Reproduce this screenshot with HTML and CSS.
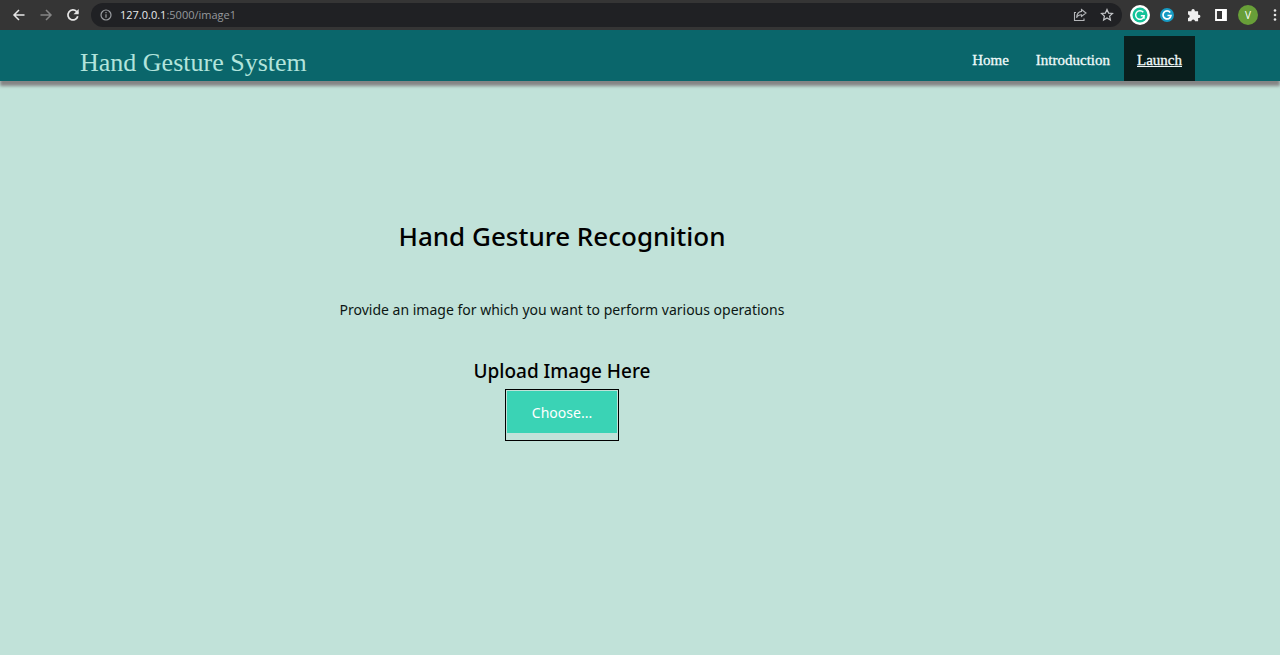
FILE: index.html
```html
<!DOCTYPE html>
<html lang="en">
<head>
<meta charset="utf-8">
<meta name="viewport" content="width=device-width, initial-scale=1">
<title>Hand Gesture System</title>
<link rel="stylesheet" href="styles.css">
</head>
<body>
<div class="toolbar">
  <button class="tool" type="button" aria-label="Back"><svg width="14" height="14" viewBox="0 0 14 14" fill="none" stroke="#e6e6e6" stroke-width="1.5"><path d="M12.5 7H2M7 2L2 7l5 5"/></svg></button>
  <button class="tool" type="button" aria-label="Forward"><svg width="14" height="14" viewBox="0 0 14 14" fill="none" stroke="#858585" stroke-width="1.5"><path d="M1.5 7H12M7 2l5 5-5 5"/></svg></button>
  <button class="tool" type="button" aria-label="Reload"><svg width="14" height="14" viewBox="0 0 14 14" fill="none" stroke="#e6e6e6" stroke-width="1.7"><path d="M11.8 8.2A5 5 0 1 1 10.6 3.5L12 5"/><path d="M12.7 1v5.2H7.5z" fill="#e6e6e6" stroke="none"/></svg></button>
  <div class="address">
    <svg width="12" height="12" viewBox="0 0 12 12" fill="none" stroke="#9a9da1" stroke-width="1.2"><circle cx="6" cy="6" r="5"/><path d="M6 5.3v3.4M6 3v1.3"/></svg>
    <span class="url"><span class="host">127.0.0.1</span>:5000/image1</span>
    <button class="tool" type="button" aria-label="Share"><svg width="14" height="14" viewBox="0 0 14 14" fill="none" stroke="#b4b6b9" stroke-width="1.1"><path d="M3 4.500H1.500v8h9.500V10.500M8.500 1.500L13 5 8.500 8.500V6.700C6 6.700 4.500 7.700 3.600 9.800 3.800 6 5.500 3.800 8.500 3.400z"/></svg></button>
    <button class="tool" type="button" aria-label="Bookmark"><svg width="14" height="14" viewBox="0 0 14 14" fill="none" stroke="#c4c6c9" stroke-width="1.2"><path d="M7 1.500l1.600 3.600 3.900.4-2.900 2.600.8 3.900L7 10l-3.400 2 .8-3.900L1.500 5.500l3.900-.4z"/></svg></button>
  </div>
  <div class="extensions">
    <button class="tool" type="button" aria-label="Grammar checker"><svg width="20" height="20" viewBox="0 0 20 20"><circle cx="10" cy="10" r="10" fill="#fff"/><circle cx="10" cy="10" r="7.500" fill="#14c39a"/><path d="M13.300 7.300A4.300 4.300 0 1 0 14.200 10.800H10.800M14 10.500v3.200" fill="none" stroke="#fff" stroke-width="1.500"/></svg></button>
    <button class="tool" type="button" aria-label="G extension"><svg width="14" height="14" viewBox="0 0 14 14"><circle cx="7" cy="7" r="7" fill="#169bc4"/><path d="M10.200 4.500A4 4 0 1 0 11 7.500H7.500" fill="none" stroke="#fff" stroke-width="1.700"/></svg></button>
    <button class="tool" type="button" aria-label="Extensions"><svg width="14" height="14" viewBox="0 0 14 14"><path fill="#f0f0f0" d="M1 3.300h3.500a1.700 1.700 0 1 1 3.200 0h3.400v3.500a1.700 1.700 0 1 1 0 3.200v3.300H8a1.800 1.800 0 0 0-3.600 0H1V10a1.700 1.700 0 0 0 0-3.400z"/></svg></button>
    <button class="tool" type="button" aria-label="Side panel"><svg width="12" height="12" viewBox="0 0 12 12"><path d="M1 1h10v10H1z" fill="none" stroke="#fff" stroke-width="1.800"/><path d="M7 1h4v10H7z" fill="#fff"/></svg></button>
    <button class="tool avatar" type="button" aria-label="Profile">V</button>
    <button class="tool menu" type="button" aria-label="Menu"><svg width="4" height="14" viewBox="0 0 4 14" fill="#e6e6e6"><circle cx="2" cy="2.500" r="1.300"/><circle cx="2" cy="7" r="1.300"/><circle cx="2" cy="11.500" r="1.300"/></svg></button>
  </div>
</div>
<header class="site-header">
  <div class="brand">Hand Gesture System</div>
  <nav class="nav">
    <a class="nav-link" href="#home">Home</a>
    <a class="nav-link" href="#introduction">Introduction</a>
    <a class="nav-link nav-link-active" href="#launch">Launch</a>
  </nav>
</header>
<main class="content">
  <h1 class="title">Hand Gesture Recognition</h1>
  <p class="lead">Provide an image for which you want to perform various operations</p>
  <h2 class="subtitle">Upload Image Here</h2>
  <div class="upload"><button class="choose" type="button">Choose...</button></div>
</main>
</body>
</html>
```
FILE: styles.css
```css
* {
  box-sizing: border-box;
}

body {
  margin: 0;
  min-height: 100vh;
  background: #c1e2d9;
  color: #000;
  font-family: "Noto Sans", "Open Sans", sans-serif;
}

button {
  border: 0;
  padding: 0;
  background: none;
  font-family: inherit;
  cursor: pointer;
}

.toolbar {
  display: flex;
  align-items: center;
  gap: 13px;
  height: 30px;
  padding-left: 12px;
  background: #353535;
  font-family: "Open Sans", "Noto Sans", sans-serif;
}

.tool {
  display: flex;
  flex: none;
}

.address {
  display: flex;
  flex: 1;
  align-items: center;
  gap: 13px;
  height: 24px;
  margin-left: -2px;
  padding: 0 8px 0 9px;
  border-radius: 12px;
  background: #202124;
}

.url {
  flex: 1;
  margin-left: -5px;
  color: #96999d;
  font-size: 11px;
  line-height: 16px;
}

.host {
  color: #e8eaed;
}

.extensions {
  display: flex;
  align-items: center;
  gap: 7px;
  margin-left: -5px;
}

.extensions .tool {
  justify-content: center;
  width: 20px;
}

.tool.avatar {
  align-items: center;
  height: 20px;
  border-radius: 50%;
  background: #689f38;
  color: #fff;
  font-size: 10px;
}

.extensions .menu {
  width: 10px;
  margin-left: 5px;
}

.site-header {
  display: flex;
  justify-content: space-between;
  height: 51px;
  padding: 6px 85px 0 80px;
  background: #0a666b;
  box-shadow: 0 5px 3px #858585;
  font-family: "Liberation Serif", "Times New Roman", serif;
}

.brand {
  color: #b2e4dc;
  font-size: 26px;
  line-height: 54px;
}

.nav {
  display: flex;
}

.nav-link {
  padding: 0 13px;
  color: #f0fafa;
  font-size: 15px;
  line-height: 48px;
  text-decoration: none;
  -webkit-text-stroke: 0.3px;
}

.nav-link + .nav-link {
  margin-left: 1px;
}

.nav-link-active {
  height: 45px;
  background: #0a1f1e;
  text-decoration: underline;
}

.content {
  display: flex;
  flex-direction: column;
  align-items: center;
  padding: 135px 156px 80px 0;
}

.title {
  margin: 0;
  font-size: 26px;
  font-weight: 500;
  line-height: 40px;
}

.lead {
  margin: 42px 0 35px;
  color: #0c1714;
  font-size: 14px;
  line-height: 24px;
}

.subtitle {
  margin: 0 0 4px;
  font-size: 19px;
  font-weight: 500;
  line-height: 28px;
}

.upload {
  padding: 1px 1px 7px;
  border: 1px solid #000;
}

.choose {
  display: block;
  height: 42px;
  padding: 0 25px;
  background: #3ad3b5;
  color: #fff;
  font-size: 14px;
}
```
